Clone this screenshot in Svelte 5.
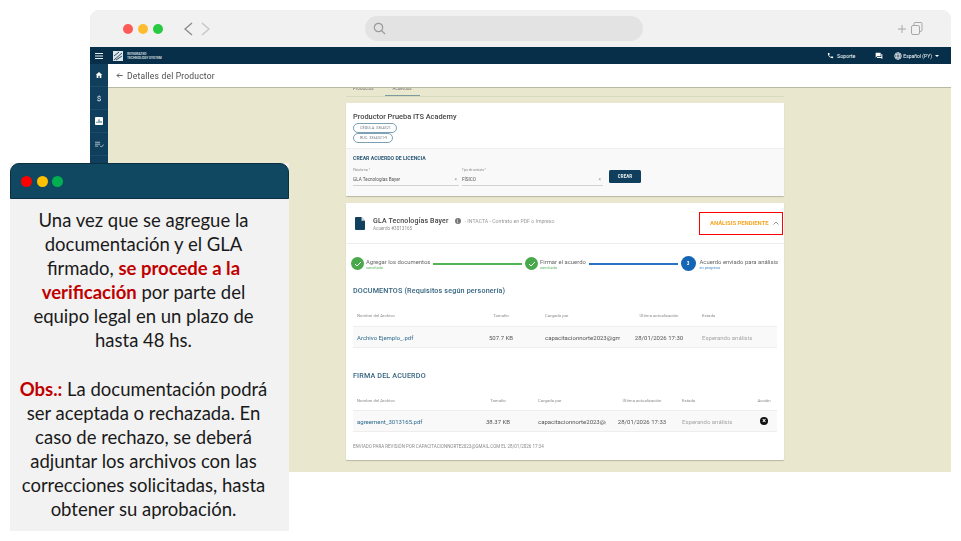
<script>
  const docs = [['Archivo Ejemplo_.pdf', '507.7 KB', 'capacitacionnorte2023@gm', '28/01/2026 17:30', 'Esperando análisis']]
  const firma = [['agreement_3013165.pdf', '38.37 KB', 'capacitacionnorte2023@gmail.com', '28/01/2026 17:33', 'Esperando análisis']]
</script>

<div class="slide">
  <div class="window">
    <div class="chrome">
      <div class="lights">
        <span class="dot" style="background:#fc5a57"></span>
        <span class="dot" style="background:#fdbc2e"></span>
        <span class="dot" style="background:#28ca42"></span>
      </div>
      <svg class="nav" width="28" height="14" viewBox="0 0 28 14" fill="none">
        <path d="M9 1 L2 7 L9 13" stroke="#8a8a8a" stroke-width="1.3" />
        <path d="M19 1 L26 7 L19 13" stroke="#c4c4c4" stroke-width="1.3" />
      </svg>
      <div class="search">
        <svg width="13" height="13" viewBox="0 0 13 13" fill="none">
          <circle cx="5.5" cy="5.5" r="4.2" stroke="#9a9a9a" stroke-width="1.2" />
          <path d="M8.7 8.7 L12 12" stroke="#9a9a9a" stroke-width="1.2" />
        </svg>
      </div>
      <svg class="tabs-icon" width="26" height="13" viewBox="0 0 26 13" fill="none" stroke="#a8a8a8" stroke-width="1">
        <path d="M1 7 H9 M5 3 V11" />
        <rect x="14.5" y="3.5" width="8" height="9" rx="1.5" />
        <path d="M17 3.5 V1.5 Q17 .5 18 .5 H24 Q25 .5 25 1.5 V8 Q25 9.5 23 9.5" />
      </svg>
    </div>

    <div class="topbar">
      <svg class="burger" width="8" height="6" viewBox="0 0 8 6" fill="#e8eef2">
        <rect width="8" height="1" /><rect y="2.5" width="8" height="1" /><rect y="5" width="8" height="1" />
      </svg>
      <span class="logo">
        <svg width="10" height="10" viewBox="0 0 10 10" fill="none" stroke="#16405a" stroke-width=".9">
          <rect width="10" height="10" fill="#dfe7ea" stroke="none" />
          <path d="M1 9 L9 2 M3 9 L9 5 M1 5 L6 1" />
        </svg>
      </span>
      <span class="brand">INTEGRATED<br />TECHNOLOGY SYSTEM</span>
      <span class="spacer"></span>
      <svg width="7" height="7" viewBox="0 0 24 24" fill="#fff"><path d="M6.6 10.8c1.4 2.8 3.8 5.1 6.6 6.6l2.2-2.2c.3-.3.7-.4 1-.2 1.1.4 2.3.6 3.6.6.6 0 1 .4 1 1V20c0 .6-.4 1-1 1C10.600 21 3 13.400 3 4c0-.6.4-1 1-1h3.500c.6 0 1 .4 1 1 0 1.300.2 2.500.6 3.600.1.300 0 .7-.2 1z" /></svg>
      <span class="top-link support">Soporte</span>
      <svg width="8" height="8" viewBox="0 0 24 24" fill="#fff"><path d="M21 6h-2v9H6v2c0 .6.4 1 1 1h11l4 4V7c0-.6-.4-1-1-1zm-4 6V3c0-.6-.4-1-1-1H3c-.6 0-1 .4-1 1v14l4-4h10c.6 0 1-.4 1-1z" /></svg>
      <svg class="globe" width="8" height="8" viewBox="0 0 12 12" fill="none" stroke="#fff" stroke-width="1">
        <circle cx="6" cy="6" r="5" /><ellipse cx="6" cy="6" rx="2.200" ry="5" /><path d="M1 6 H11 M1.800 3.500 H10.200 M1.800 8.500 H10.200" />
      </svg>
      <span class="top-link lang">Español (PY)</span>
      <span class="caret"></span>
    </div>

    <div class="body">
      <aside class="rail">
        <div class="rail-item">
          <svg width="8" height="8" viewBox="0 0 24 24" fill="#fff"><path d="M10 21v-7h4v7h5v-9h3L12 3 2 12h3v9z" /></svg>
        </div>
        <div class="rail-item dollar">$</div>
        <div class="rail-item">
          <svg width="8" height="8" viewBox="0 0 12 12"><rect width="12" height="12" rx="1" fill="#fff" /><path d="M3 9 V7 M6 9 V3.500 M9 9 V6" stroke="#0f3f5c" stroke-width="1.300" /></svg>
        </div>
        <div class="rail-item">
          <svg width="9" height="7" viewBox="0 0 14 10" fill="none" stroke="#d5dfe5" stroke-width="1.200"><path d="M0 1.500 H8 M0 4.500 H8 M0 7.500 H5 M8 7 L10 9 L13.500 5" /></svg>
        </div>
      </aside>

      <main class="main">
        <header class="page-head">
          <svg width="7" height="7" viewBox="0 0 10 10" fill="none" stroke="#555" stroke-width="1.300"><path d="M9.500 5 H1.500 M4.500 2 L1.500 5 L4.500 8" /></svg>
          <h1>Detalles del Productor</h1>
        </header>

        <div class="scroll">
          <div class="column">
            <div class="tabs"><span class="tab">Productos</span><span class="tab tab-on">Acuerdos</span></div>

            <section class="card first">
              <div class="producer">
                <h2>Productor Prueba ITS Academy</h2>
                <span class="pill">CÉDULA: 3364321</span>
                <span class="pill">RUC: 3364321-9</span>
              </div>
              <div class="create">
                <h3>CREAR ACUERDO DE LICENCIA</h3>
                <div class="form">
                  <div class="field f1">
                    <label for="plataforma">Plataforma *</label>
                    <div id="plataforma" class="input"><span>GLA Tecnologías Bayer</span><i>×</i></div>
                  </div>
                  <div class="field f2">
                    <label for="tipo">Tipo de contrato *</label>
                    <div id="tipo" class="input"><span>FÍSICO</span><i>×</i></div>
                  </div>
                  <button class="create-btn">CREAR</button>
                </div>
              </div>
            </section>

            <section class="card second">
              <div class="agreement">
                <svg width="10" height="13" viewBox="0 0 10 12" preserveAspectRatio="none"><path d="M1 0 H6.500 L10 3.500 V11 Q10 12 9 12 H1 Q0 12 0 11 V1 Q0 0 1 0Z" fill="#12405f" /><path d="M6.500 0 V3.500 H10" fill="#fff" opacity=".8" /></svg>
                <div class="agreement-name">
                  <div class="name-line">
                    <strong>GLA Tecnologías Bayer</strong>
                    <span class="info">i</span>
                    <span class="kind">- INTACTA - Contrato en PDF o Impreso</span>
                  </div>
                  <div class="agreement-id">Acuerdo #3013165</div>
                </div>
                <div class="status-box">
                  <span>ANÁLISIS PENDIENTE</span>
                  <svg width="6" height="4" viewBox="0 0 6 4" fill="none" stroke="#8a8a8a" stroke-width=".9"><path d="M.5 3.500 L3 1 L5.500 3.500" /></svg>
                </div>
              </div>

              <div class="steps">
                <div class="step">
                  <span class="bullet ok"><svg width="8" height="6" viewBox="0 0 8 6" fill="none" stroke="#fff" stroke-width="1"><path d="M1 3 L3 5 L7 1" /></svg></span>
                  <div class="step-text"><div class="step-title">Agregar los documentos</div><div class="step-sub green">concluido</div></div>
                </div>
                <span class="line green-line"></span>
                <div class="step">
                  <span class="bullet ok"><svg width="8" height="6" viewBox="0 0 8 6" fill="none" stroke="#fff" stroke-width="1"><path d="M1 3 L3 5 L7 1" /></svg></span>
                  <div class="step-text"><div class="step-title">Firmar el acuerdo</div><div class="step-sub green">concluido</div></div>
                </div>
                <span class="line blue-line"></span>
                <div class="step">
                  <span class="bullet now">3</span>
                  <div class="step-text"><div class="step-title">Acuerdo enviado para análisis</div><div class="step-sub blue">en progreso</div></div>
                </div>
              </div>

              <h4 class="docs-title">DOCUMENTOS (Requisitos según personería)</h4>

              <div class="table docs">
                <div class="thead">
                  <span>Nombre del Archivo</span><span class="c">Tamaño</span><span class="by">Cargado por</span><span class="c">Última actualización</span><span class="st">Estado</span>
                </div>
                {#each docs as r}
                  <div class="tr">
                    <span class="file">{r[0]}</span><span class="c">{r[1]}</span><span class="by">{r[2]}</span><span class="c">{r[3]}</span><span class="st wait">{r[4]}</span>
                  </div>
                {/each}
              </div>

              <h4 class="sign-title">FIRMA DEL ACUERDO</h4>

              <div class="table sign">
                <div class="thead">
                  <span>Nombre del Archivo</span><span class="c">Tamaño</span><span class="by">Cargado por</span><span class="c">Última actualización</span><span class="st">Estado</span><span class="c">Acción</span>
                </div>
                {#each firma as r}
                  <div class="tr">
                    <span class="file">{r[0]}</span><span class="c">{r[1]}</span><span class="by">{r[2]}</span><span class="c">{r[3]}</span><span class="st wait">{r[4]}</span>
                    <span class="c"><span class="remove">×</span></span>
                  </div>
                {/each}
              </div>

              <p class="sent">ENVIADO PARA REVISIÓN POR CAPACITACIONNORTE2023@GMAIL.COM EL 28/01/2026 17:34</p>
            </section>
          </div>
        </div>
      </main>
    </div>
  </div>

  <div class="callout">
    <div class="callout-bar">
      <span class="cdot" style="background:#fe0000"></span>
      <span class="cdot" style="background:#ffc000"></span>
      <span class="cdot" style="background:#00b050"></span>
    </div>
    <div class="callout-text">
      <p>Una vez que se agregue la documentación y el GLA firmado, <b>se procede a la verificación</b> por parte del equipo legal en un plazo de hasta 48 hs.</p>
      <p class="obs"><b>Obs.:</b> La documentación podrá ser aceptada o rechazada. En caso de rechazo, se deberá adjuntar los archivos con las correcciones solicitadas, hasta obtener su aprobación.</p>
    </div>
  </div>
</div>

<style>
  :global(body) {
    margin: 0;
    background: #fff;
  }

  .slide {
    position: relative;
    width: 961px;
    height: 541px;
    overflow: hidden;
    padding: 10px 10px 0 90px;
    box-sizing: border-box;
    font-family: Roboto, sans-serif;
  }

  .window {
    display: flex;
    flex-direction: column;
    height: 462px;
    border-radius: 9px 9px 0 0;
    overflow: hidden;
    background: #e9e7ce;
    filter: blur(.45px);
  }

  .chrome {
    flex: none;
    height: 37px;
    background: #f1f1f1;
    display: flex;
    align-items: center;
    padding-left: 33px;
  }

  .lights {
    display: flex;
    gap: 5px;
  }

  .dot {
    width: 10px;
    height: 10px;
    border-radius: 50%;
  }

  .nav {
    margin-left: 20px;
  }

  .search {
    width: 278px;
    height: 25px;
    margin-left: 154px;
    padding-left: 8px;
    box-sizing: border-box;
    background: #e3e3e3;
    border-radius: 13px;
    display: flex;
    align-items: center;
  }

  .tabs-icon {
    margin-left: auto;
    margin-right: 28px;
  }

  .topbar {
    flex: none;
    height: 17px;
    background: #072f49;
    display: flex;
    align-items: center;
    color: #fff;
    padding-right: 12px;
  }

  .burger {
    margin-left: 5px;
  }

  .logo {
    display: flex;
    margin-left: 10px;
  }

  .brand {
    margin-left: 4px;
    font-size: 3.300px;
    line-height: 4px;
    font-weight: 500;
    color: #e6ecef;
  }

  .spacer {
    flex: 1;
  }

  .top-link {
    font-size: 5px;
    white-space: nowrap;
  }

  .support {
    font-size: 5.200px;
    margin: 0 20px 0 3px;
  }

  .globe {
    margin-left: 11px;
  }

  .lang {
    margin-left: 1px;
  }

  .caret {
    margin-left: 3px;
    border: 2px solid transparent;
    border-top-color: #fff;
    border-bottom: 0;
  }

  .body {
    flex: 1;
    min-height: 0;
    display: flex;
  }

  .rail {
    flex: none;
    width: 18px;
    background: #0f3f5c;
  }

  .rail-item {
    height: 23px;
    display: flex;
    align-items: center;
    justify-content: center;
    border-bottom: 1px solid #1b4b67;
    box-sizing: border-box;
  }

  .dollar {
    color: #d5dfe5;
    font-size: 8px;
    font-weight: 500;
  }

  .main {
    flex: 1;
    min-width: 0;
    display: flex;
    flex-direction: column;
  }

  .page-head {
    flex: none;
    height: 24px;
    background: #fff;
    border-bottom: 1px solid #b9b8a4;
    box-sizing: border-box;
    display: flex;
    align-items: center;
    padding-left: 8px;
    gap: 4px;
  }

  h1 {
    margin: 0;
    font-size: 8.500px;
    font-weight: 400;
    color: #4d4d4d;
    letter-spacing: .2px;
  }

  .scroll {
    flex: 1;
    min-height: 0;
    overflow: hidden;
    padding-left: 238px;
  }

  .column {
    width: 438px;
  }

  .tabs {
    height: 8px;
    border-bottom: 1px solid #d9d8c0;
    display: flex;
    padding-left: 7px;
    gap: 11px;
  }

  .tab {
    height: 8px;
    line-height: 1px;
    font-size: 4.500px;
    color: #777;
  }

  .tab-on {
    width: 35px;
    text-align: center;
    box-sizing: border-box;
    border-bottom: 1px solid #7c9aa0;
  }

  .card {
    background: #fff;
    border-radius: 1px;
    box-shadow: 0 1px 1px #b9b8a4;
  }

  .first {
    margin-top: 6px;
    height: 93px;
    display: flex;
    flex-direction: column;
  }

  .producer {
    height: 46px;
    padding: 9px 7px 0;
    box-sizing: border-box;
    display: flex;
    flex-direction: column;
    align-items: flex-start;
    border-bottom: 1px solid #eee;
  }

  h2 {
    margin: 0 0 2px;
    font-size: 7.400px;
    line-height: 9px;
    font-weight: 500;
    color: #444;
  }

  .pill {
    height: 8px;
    line-height: 8px;
    padding: 0 5px 0 6px;
    border: .7px solid #7ea0b5;
    border-radius: 5px;
    font-size: 3.800px;
    color: #6f7c85;
  }

  .create {
    flex: 1;
    background: #f9f9f9;
    padding: 6px 7px 0;
  }

  h3 {
    margin: 0;
    font-size: 5.200px;
    line-height: 7px;
    font-weight: 700;
    color: #2c5a78;
  }

  .form {
    display: flex;
    align-items: flex-start;
    margin-top: 6px;
  }

  .field {
    display: flex;
    flex-direction: column;
  }

  .f1 {
    width: 106px;
    margin-right: 3px;
  }

  .f2 {
    width: 141px;
    margin-right: 6px;
  }

  label {
    font-size: 3px;
    line-height: 5px;
    color: #8b8b8b;
  }

  .input {
    margin-top: 3px;
    height: 9px;
    display: flex;
    justify-content: space-between;
    font-size: 4.600px;
    line-height: 8px;
    color: #555;
    border-bottom: 1px solid #d2d2d2;
  }

  .input i {
    font-style: normal;
    color: #999;
    padding-right: 2px;
  }

  .create-btn {
    margin-top: 2px;
    width: 32px;
    height: 13px;
    padding: 0;
    border: 0;
    border-radius: 1.500px;
    background: #0f3f5c;
    color: #e6ecef;
    font: 700 4.500px Roboto, sans-serif;
  }

  .second {
    margin-top: 7px;
    height: 257px;
    overflow: hidden;
  }

  .agreement {
    height: 41px;
    padding: 0 1px 0 9px;
    box-sizing: border-box;
    display: flex;
    align-items: center;
    border-bottom: 1px solid #eee;
  }

  .agreement-name {
    margin: 2px 0 0 8px;
    flex: 1;
  }

  .name-line {
    display: flex;
    align-items: center;
    height: 9px;
  }

  .name-line strong {
    font-size: 7px;
    font-weight: 500;
    color: #444;
    letter-spacing: .15px;
  }

  .info {
    width: 6px;
    height: 6px;
    margin: 0 4px 0 6px;
    border-radius: 50%;
    background: #777;
    color: #fff;
    font-size: 5px;
    line-height: 6px;
    text-align: center;
  }

  .kind {
    font-size: 5.200px;
    color: #9a9a9a;
  }

  .agreement-id {
    margin-top: 1px;
    font-size: 4.600px;
    line-height: 6px;
    color: #8f8f8f;
  }

  .status-box {
    width: 84px;
    height: 23px;
    box-sizing: border-box;
    border: 1.500px solid #f00;
    display: flex;
    align-items: center;
    padding-left: 10px;
    gap: 4px;
    font-size: 5.900px;
    font-weight: 700;
    color: #f5a623;
    white-space: nowrap;
  }

  .steps {
    height: 39px;
    padding: 0 6px 0 5px;
    display: flex;
    align-items: center;
  }

  .step {
    display: flex;
    align-items: center;
    gap: 2px;
  }

  .step-text {
    padding-top: 1px;
  }

  .bullet {
    flex: none;
    width: 13px;
    height: 13px;
    border-radius: 50%;
    display: flex;
    align-items: center;
    justify-content: center;
  }

  .ok {
    background: #48a94a;
  }

  .now {
    width: 15px;
    height: 15px;
    background: #1565b5;
    color: #fff;
    font-size: 4.500px;
    font-weight: 700;
    margin-right: 2px;
  }

  .step-title {
    font-size: 5.900px;
    line-height: 6px;
    color: #666;
    white-space: nowrap;
  }

  .step-sub {
    font-size: 3.900px;
    line-height: 5px;
  }

  .green {
    color: #58b55a;
  }

  .blue {
    color: #4a8cd0;
  }

  .line {
    height: 2px;
    flex: 1;
    margin: 0 3px;
  }

  .steps .green-line {
    background: #52b455;
  }

  .steps .blue-line {
    background: #2a73c4;
  }

  h4 {
    margin: 0;
    font-size: 7.200px;
    line-height: 8px;
    font-weight: 500;
    color: #34627f;
    padding-left: 7px;
    letter-spacing: .15px;
  }

  .table {
    margin: 10px 7px 0;
  }

  .thead,
  .tr {
    display: grid;
    align-items: center;
    padding-left: 4px;
    white-space: nowrap;
  }

  .docs .thead,
  .docs .tr {
    grid-template-columns: 124px 40px 99px 78px 1fr;
  }

  .sign .thead,
  .sign .tr {
    grid-template-columns: 122px 38px 89px 72px 74px 24px;
  }

  .thead {
    height: 21px;
    font-size: 4.300px;
    color: #8c8c8c;
  }

  .sign .thead {
    height: 20px;
  }

  .tr {
    height: 22px;
    box-sizing: border-box;
    background: #f9f9f9;
    border-top: 1px solid #eee;
    border-bottom: 1px solid #eee;
    color: #555;
    font-size: 6px;
  }

  .c {
    justify-self: center;
  }

  .by {
    overflow: hidden;
    padding-left: 24px;
  }

  .sign .by {
    padding-left: 21px;
  }

  .st {
    padding-left: 4px;
  }

  .file {
    color: #2f6b8f;
  }

  .wait {
    color: #a5a5a5;
  }

  .remove {
    display: block;
    width: 8px;
    height: 8px;
    border-radius: 50%;
    background: #111;
    color: #fff;
    font-size: 7px;
    font-weight: 700;
    line-height: 8px;
    text-align: center;
  }

  .docs-title {
    margin-top: 4px;
  }

  .sign-title {
    margin-top: 24px;
  }

  .sent {
    margin: 12px 0 0 7px;
    font-size: 4.500px;
    color: #8b8b8b;
    white-space: nowrap;
  }

  .callout {
    position: absolute;
    left: 10px;
    top: 163px;
    width: 279px;
    height: 368px;
    display: flex;
    flex-direction: column;
    background: #f2f2f2;
    font-family: Lato, sans-serif;
  }

  .callout-bar {
    flex: none;
    height: 36px;
    box-sizing: border-box;
    background: #104862;
    border: 1px solid #0d2f42;
    border-radius: 9px 9px 0 0;
    display: flex;
    align-items: center;
    gap: 4.500px;
    padding-left: 10px;
  }

  .cdot {
    width: 11px;
    height: 11px;
    border-radius: 50%;
  }

  .callout-text {
    padding: 9px 18px 0 6px;
    text-align: center;
    font-size: 18.500px;
    line-height: 24.100px;
    color: #1a1a1a;
  }

  .callout-text p {
    margin: 0;
  }

  .callout-text b {
    color: #c00000;
    font-weight: 700;
  }

  .obs {
    margin-top: 24px !important;
  }
</style>
